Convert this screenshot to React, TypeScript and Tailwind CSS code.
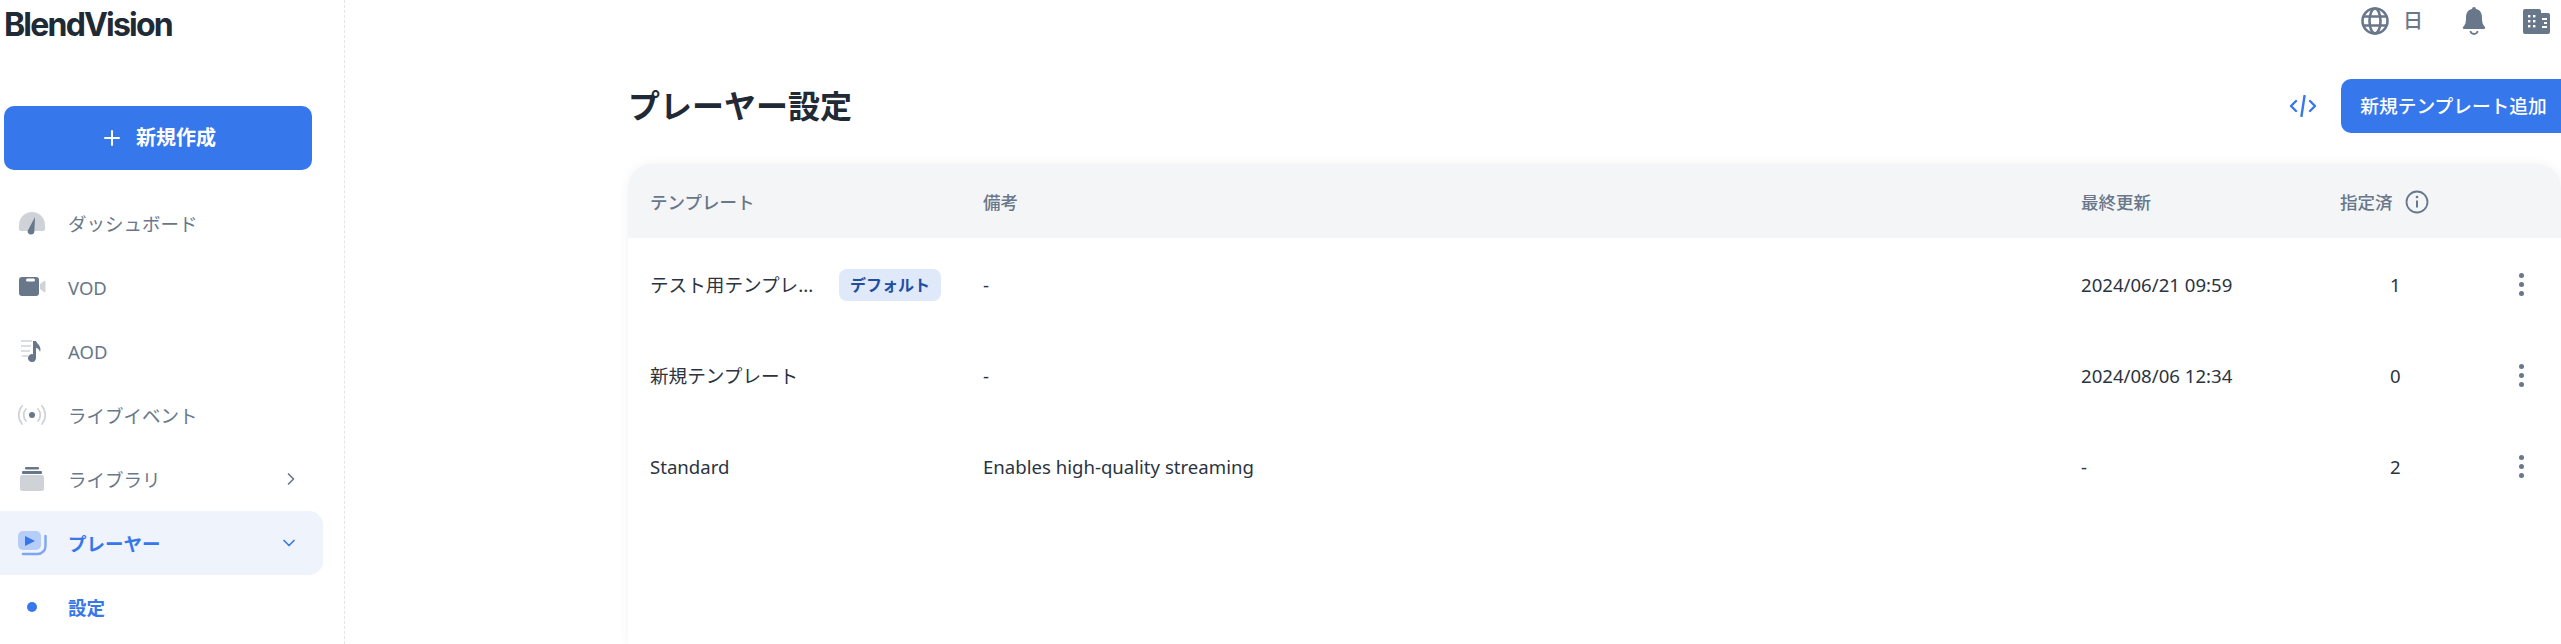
import { ChevronDown, ChevronRight, Plus } from "lucide-react";

const SANS = "font-['Noto_Sans','Noto_Sans_CJK_JP',sans-serif]";

function DashboardIcon() {
  return (
    <svg width="28" height="24" viewBox="0 0 28 24">
      <path d="M1 14a13 13 0 0 1 26 0v4a2 2 0 0 1-2 2H3a2 2 0 0 1-2-2z" fill="#cfd3d8" />
      <path d="M17 5l-.6 14a3.400 3.400 0 1 1-6.800 0z" fill="#69778a" transform="translate(0 1)" />
    </svg>
  );
}

function VodIcon() {
  return (
    <svg width="28" height="20" viewBox="0 0 28 20">
      <rect x="1" y="0" width="20" height="19" rx="3" fill="#69778a" />
      <rect x="8" y="1.500" width="9" height="3" rx="1.500" fill="#fff" />
      <path d="M22 7l4-3a1 1 0 0 1 1.500 1v9a1 1 0 0 1-1.500 1l-4-3z" fill="#cfd3d8" />
    </svg>
  );
}

function AodIcon() {
  return (
    <svg width="24" height="22" viewBox="0 0 24 22">
      <path d="M1 1h11M1 6h10M1 11h9M2 16h6" stroke="#cfd3d8" strokeWidth="1.600" />
      <path d="M13 1h3c1 3 6 5 4 11-.5-2-2-4-4-4v10a4 4 0 1 1-3-3.800z" fill="#69778a" />
    </svg>
  );
}

function LiveIcon() {
  return (
    <svg width="28" height="20" viewBox="0 0 28 20" fill="none">
      <circle cx="14" cy="10" r="3" fill="#69778a" />
      <path d="M8 4a9 9 0 0 0 0 12M20 4a9 9 0 0 1 0 12M4 1a14 14 0 0 0 0 18M24 1a14 14 0 0 1 0 18" stroke="#cfd3d8" strokeWidth="1.800" strokeLinecap="round" />
    </svg>
  );
}

function LibraryIcon() {
  return (
    <svg width="24" height="24" viewBox="0 0 24 24">
      <rect x="5" y="0" width="14" height="2.500" rx="1" fill="#69778a" />
      <rect x="2" y="4" width="20" height="3" rx="1" fill="#69778a" />
      <rect x="0" y="8" width="24" height="16" rx="2.500" fill="#cfd3d8" />
    </svg>
  );
}

function PlayerIcon() {
  return (
    <svg width="29" height="25" viewBox="0 0 29 25" fill="none">
      <rect x="0" y="0" width="23" height="19" rx="5" fill="#b6cdf8" />
      <path d="M7 5l10 5-10 5z" fill="#3777ec" />
      <path d="M27.500 5v10a8 8 0 0 1-8 8H5" stroke="#7ea6f2" strokeWidth="2.400" strokeLinecap="round" />
    </svg>
  );
}

function GlobeIcon() {
  return (
    <svg width="28" height="28" viewBox="0 0 28 28" fill="none" stroke="#69778a" strokeWidth="2.600">
      <circle cx="14" cy="14" r="12.500" />
      <ellipse cx="14" cy="14" rx="5.500" ry="12.500" />
      <path d="M2.500 9.500h23M2.500 18.500h23" />
    </svg>
  );
}

function BellIcon() {
  return (
    <svg width="24" height="28" viewBox="0 0 24 28">
      <path d="M12 0a2 2 0 0 1 2 2c5 1 6 5 6 9 0 5 1 7 3 9 .5 1 0 2-1 2H2c-1 0-1.500-1-1-2 2-2 3-4 3-9 0-4 1-8 6-9a2 2 0 0 1 2-2z" fill="#69778a" />
      <path d="M8.500 24a3.500 3 0 0 0 7 0" fill="none" stroke="#69778a" strokeWidth="1.800" />
    </svg>
  );
}

function BuildingIcon() {
  return (
    <svg width="27" height="25" viewBox="0 0 27 25">
      <path d="M2 0h14a2 2 0 0 1 2 2v2h7a2 2 0 0 1 2 2v17a2 2 0 0 1-2 2H2a2 2 0 0 1-2-2V2a2 2 0 0 1 2-2z" fill="#69778a" />
      <g fill="#fff">
        <rect x="5" y="6" width="2.400" height="2.400" />
        <rect x="10" y="6" width="2.400" height="2.400" />
        <rect x="5" y="11" width="2.400" height="2.400" />
        <rect x="10" y="11" width="2.400" height="2.400" />
        <rect x="5" y="16" width="2.400" height="2.400" />
        <rect x="10" y="16" width="2.400" height="2.400" />
        <rect x="19" y="9" width="5" height="2" />
        <rect x="21" y="13" width="3" height="2" />
        <rect x="19" y="17" width="5" height="2" />
      </g>
    </svg>
  );
}

function CodeIcon() {
  return (
    <svg width="28" height="22" viewBox="0 0 28 22" fill="none" stroke="#3777ec" strokeWidth="2.400" strokeLinecap="round" strokeLinejoin="round">
      <path d="M7 6l-5 5 5 5M21 6l5 5-5 5M15.500 1l-3 20" />
    </svg>
  );
}

function InfoIcon() {
  return (
    <svg width="24" height="24" viewBox="0 0 24 24" fill="none" stroke="#69778a">
      <circle cx="12" cy="12" r="10.500" strokeWidth="1.800" />
      <path d="M12 10.500v7" strokeWidth="2" />
      <circle cx="12" cy="7" r="1.300" fill="#69778a" stroke="none" />
    </svg>
  );
}

function Kebab() {
  return (
    <div className="flex flex-col items-center gap-[4px]">
      <span className="size-[5px] rounded-full bg-[#69778a]" />
      <span className="size-[5px] rounded-full bg-[#69778a]" />
      <span className="size-[5px] rounded-full bg-[#69778a]" />
    </div>
  );
}

const NAV = [
  { label: "ダッシュボード", icon: <DashboardIcon /> },
  { label: "VOD", icon: <VodIcon /> },
  { label: "AOD", icon: <AodIcon /> },
  { label: "ライブイベント", icon: <LiveIcon /> },
  { label: "ライブラリ", icon: <LibraryIcon />, chevron: true },
];

const ROWS = [
  { name: "テスト用テンプレ...", badge: true, note: "-", updated: "2024/06/21 09:59", count: "1" },
  { name: "新規テンプレート", note: "-", updated: "2024/08/06 12:34", count: "0" },
  { name: "Standard", note: "Enables high-quality streaming", updated: "-", count: "2" },
];

const COLS = "grid grid-cols-[333px_1098px_259px_112px_1fr]";

function Sidebar() {
  return (
    <aside className="w-[345px] shrink-0 border-r border-dashed border-[#e3e5e8] pr-[21px]">
      <div className="h-[106px] pl-[4px] pt-[3px] font-['Inter',sans-serif] text-[32px] leading-[44px] font-bold tracking-[-1.800px] text-[#1f2a36]">
        BlendVision
      </div>
      <button className="ml-[4px] flex h-[64px] w-[308px] items-center justify-center gap-[12px] rounded-[10px] bg-[#3777ec] text-[20px] font-bold text-white">
        <Plus size={24} strokeWidth={2} />
        新規作成
      </button>
      <nav className="mt-[21px]">
        {NAV.map((item) => (
          <div key={item.label} className="flex h-[64px] items-center text-[18.500px] text-[#69778a]">
            <span className="flex w-[68px] justify-center pl-[4px] pr-[8px]">{item.icon}</span>
            <span className="flex-1 pt-[2px]">{item.label}</span>
            {item.chevron && <ChevronRight size={20} className="mr-[22px]" />}
          </div>
        ))}
        <div className="flex h-[64px] items-center rounded-r-[14px] bg-[#eef3fc] text-[18.500px] font-bold text-[#3777ec]">
          <span className="flex w-[68px] justify-center pl-[4px] pr-[8px]"><PlayerIcon /></span>
          <span className="flex-1 pt-[2px]">プレーヤー</span>
          <ChevronDown size={20} className="mr-[24px]" />
        </div>
        <div className="flex h-[64px] items-center text-[18.500px] font-bold text-[#3777ec]">
          <span className="flex w-[68px] justify-center pl-[4px] pr-[8px]">
            <span className="size-[10px] rounded-full bg-[#3777ec]" />
          </span>
          <span className="pt-[2px]">設定</span>
        </div>
      </nav>
    </aside>
  );
}

export default function App() {
  return (
    <div className={`flex h-[644px] w-[2561px] overflow-hidden bg-white ${SANS}`}>
      <Sidebar />
      <main className="min-w-0 flex-1">
        <div className="flex h-[42px] items-center justify-end">
          <GlobeIcon />
          <span className="ml-[14px] text-[20px] font-medium text-[#69778a]">日</span>
          <span className="ml-[39px] flex"><BellIcon /></span>
          <span className="ml-[37px] mr-[11px] flex"><BuildingIcon /></span>
        </div>
        <div className="mt-[37px] flex h-[54px] items-center pl-[283px]">
          <h1 className="flex-1 text-[32px] font-bold text-[#1f2a36]">プレーヤー設定</h1>
          <CodeIcon />
          <button className="ml-[24px] h-[54px] w-[220px] rounded-l-[10px] bg-[#3777ec] pl-[5px] text-[18.700px] font-medium whitespace-nowrap text-white">
            新規テンプレート追加
          </button>
        </div>
        <section className="mt-[31px] ml-[283px] h-[480px] rounded-t-[24px] bg-white shadow-[0_0_12px_rgba(31,42,54,0.05)]">
          <div className={`${COLS} h-[74px] items-center rounded-t-[24px] bg-[#f3f5f7] pt-[2px] pl-[22px] text-[17.500px] font-medium text-[#69778a]`}>
            <span>テンプレート</span>
            <span>備考</span>
            <span>最終更新</span>
            <span className="flex items-center gap-[12px]">指定済 <InfoIcon /></span>
          </div>
          {ROWS.map((row) => (
            <div key={row.name} className={`${COLS} h-[91px] items-center pt-[2px] pl-[22px] text-[18.600px] text-[#2b3440] first-of-type:h-[92px]`}>
              <span className="flex items-center">
                <span className="w-[189px]">{row.name}</span>
                {row.badge && (
                  <span className="rounded-[8px] bg-[#dfe9fa] px-[11px] py-[4px] text-[16px] font-bold text-[#1e4fa3]">
                    デフォルト
                  </span>
                )}
              </span>
              <span>{row.note}</span>
              <span>{row.updated}</span>
              <span className="pl-[50px]">{row.count}</span>
              <span className="flex justify-center pl-[29px]"><Kebab /></span>
            </div>
          ))}
        </section>
      </main>
    </div>
  );
}
